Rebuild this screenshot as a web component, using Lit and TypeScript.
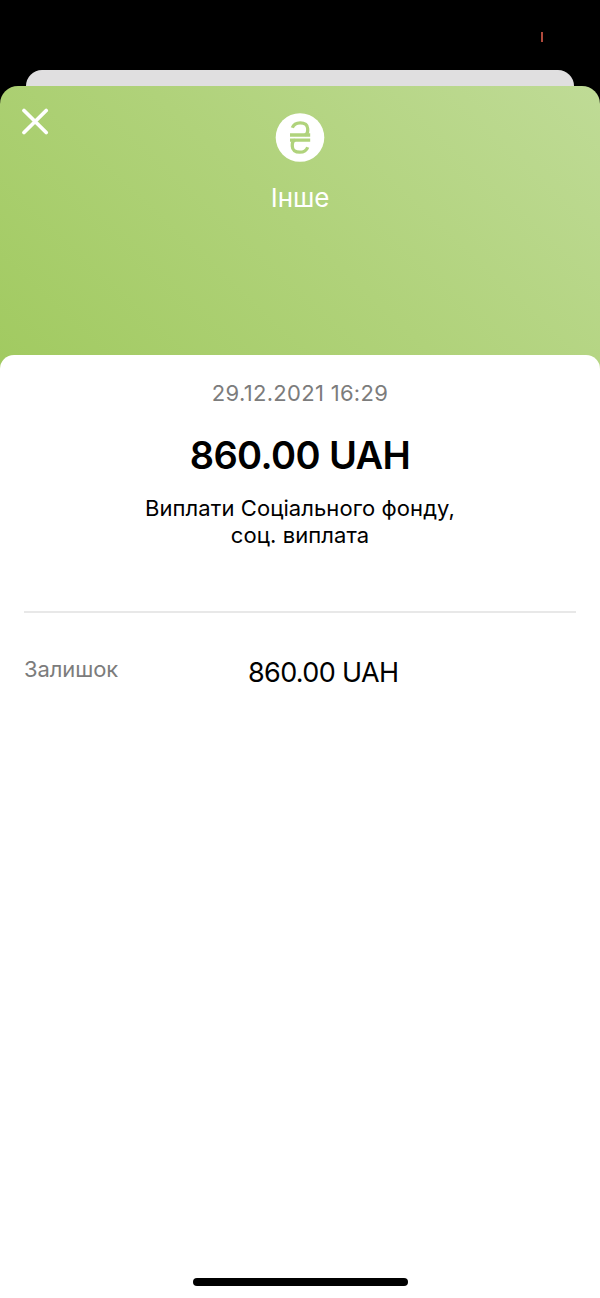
import { LitElement, html, css } from "lit";
import { customElement } from "lit/decorators.js";

@customElement("app-root")
export class AppRoot extends LitElement {
  static styles = css`
    :host { display: block; height: 1298px; background: #000; overflow: hidden; font-family: Inter, "Liberation Sans", sans-serif; color: #000; }
    * { box-sizing: border-box; }
    .screen { height: 1298px; display: flex; flex-direction: column; }
    .status { height: 70px; flex: none; display: flex; justify-content: flex-end; padding: 32px 57px 0 0; }
    .mark { width: 2px; height: 10px; background: #b04a3c; }
    .behind { height: 16px; flex: none; margin: 0 26px; background: #e0dfe0; border-radius: 16px 16px 0 0; }
    .sheet { flex: 1; display: flex; flex-direction: column; border-radius: 18px 18px 0 0; overflow: hidden; background: linear-gradient(43deg, #a1ca60, #b0d27a 50%, #bfdb96) top / 100% 285px no-repeat #fff; }
    .header { height: 269px; flex: none; display: grid; grid-template-columns: 100px 1fr 100px; }
    .close { width: 28px; height: 28px; margin: 21px 0 0 21px; }
    .category { display: flex; flex-direction: column; align-items: center; padding-top: 26px; color: #fff; }
    .coin { width: 50px; height: 50px; display: block; }
    .name { margin-top: 19px; font-size: 26px; line-height: 34px; letter-spacing: -0.1px; }
    .card { flex: 1; background: #fff; border-radius: 14px 14px 0 0; padding: 24px 24px 12px; display: flex; flex-direction: column; text-align: center; }
    .date { color: #7c7c7c; font-size: 22px; line-height: 28px; letter-spacing: 0.3px; }
    .amount { margin-top: 24px; font-size: 38px; line-height: 48px; font-weight: 600; letter-spacing: -0.6px; }
    .desc { margin-top: 16px; font-size: 22px; line-height: 27px; letter-spacing: 0.08px; }
    .balance { margin-top: 62px; border-top: 2px solid #e8e8e8; padding-top: 42px; display: grid; grid-template-columns: 224px 1fr; text-align: left; }
    .label { color: #7c7c7c; font-size: 22px; line-height: 28px; letter-spacing: -0.1px; }
    .value { font-size: 27px; line-height: 36px; letter-spacing: -0.65px; }
    .home { width: 215px; height: 8px; border-radius: 4px; background: #000; margin: auto auto 0; }
  `;

  render() {
    return html`
      <div class="screen">
        <div class="status"><div class="mark"></div></div>
        <div class="behind"></div>
        <div class="sheet">
          <div class="header">
            <svg class="close" viewBox="0 0 28 28" fill="none" stroke="#fff" stroke-width="3.7" stroke-linecap="round"><path d="M3 3.500 25.200 25.500M25.200 3.500 3 25.500" /></svg>
            <div class="category">
              <svg class="coin" viewBox="0 0 50 50" fill="none">
                <circle cx="25" cy="25.500" r="24.300" fill="#fff" />
                <g stroke="#b0d37c" stroke-width="3.300">
                  <path d="M17.300 15.800C18.600 12.300 21.500 10.800 25.200 10.800C29.800 10.800 32.700 13.100 32.700 16.700V18.800C32.700 20.700 31.800 22.300 30 23.100" />
                  <path d="M15 23H35.200M15 28.100H35.200" />
                  <path d="M20 28C18.200 28.800 17.300 30.400 17.300 32.300V34.200C17.300 37.900 20.200 40.200 24.800 40.200C28.500 40.200 31.400 38.700 32.700 35.200" />
                </g>
              </svg>
              <div class="name">Інше</div>
            </div>
          </div>
          <main class="card">
            <div class="date">29.12.2021 16:29</div>
            <div class="amount">860.00 UAH</div>
            <div class="desc">Виплати Соціального фонду,<br />соц. виплата</div>
            <div class="balance">
              <div class="label">Залишок</div>
              <div class="value">860.00 UAH</div>
            </div>
            <div class="home"></div>
          </main>
        </div>
      </div>
    `;
  }
}
